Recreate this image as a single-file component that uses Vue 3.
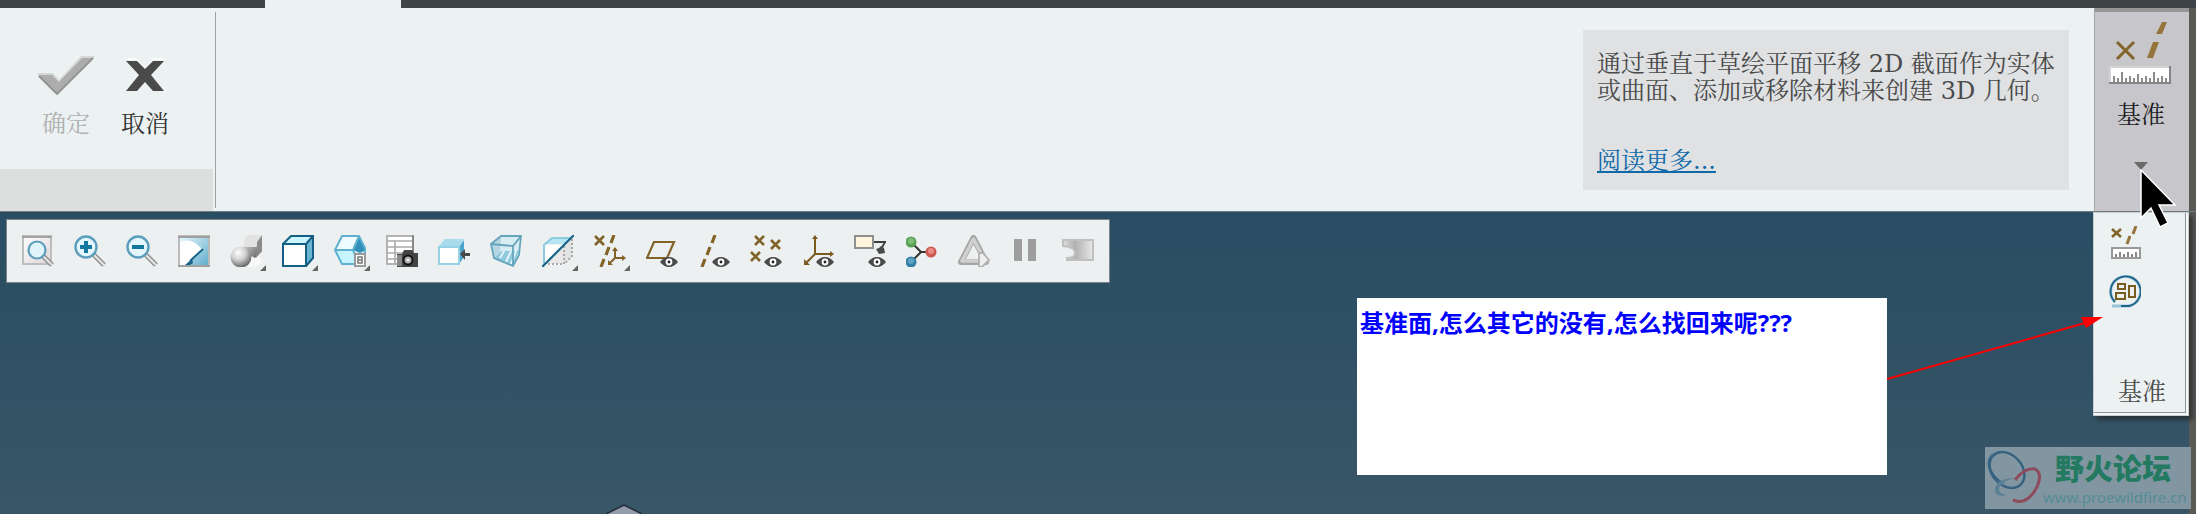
<script setup>
const eye = (x, y) =>
  `<path d="M${x - 9} ${y}Q${x - 5} ${y - 5} ${x} ${y - 5}Q${x + 5} ${y - 5} ${x + 9} ${y}Q${x + 5} ${y + 5} ${x} ${y + 5}Q${x - 5} ${y + 5} ${x - 9} ${y}Z" fill="#4a4a4a"/><circle cx="${x}" cy="${y}" r="3.4" fill="#fff"/><circle cx="${x}" cy="${y}" r="1.4" fill="#222"/>`

const cross = (x, y) =>
  `<path d="M${x} ${y}l9 9m0-9l-9 9" stroke="#826429" stroke-width="2.6" fill="none"/>`

const lens = (sign) =>
  `<path d="M20 20l10 10" stroke="#8c8c8c" stroke-width="5"/><path d="M20 20l10 10" stroke="#e2e2e2" stroke-width="2.4"/><circle cx="12" cy="12" r="10.5" fill="#e4f6fd" stroke="#5b9dba" stroke-width="2.4"/><path d="${sign}" stroke="#13779f" stroke-width="4" fill="none"/>`

const tools = [
  {
    label: '重新调整',
    art: '<rect x="1" y="1" width="28" height="28" fill="url(#paper)" stroke="#bdbdbd" stroke-width="2"/><path d="M0 2h30" stroke="#a3a3a3" stroke-width="2"/><path d="M21 21l9 9" stroke="#8c8c8c" stroke-width="5"/><path d="M21 21l9 9" stroke="#e2e2e2" stroke-width="2.4"/><circle cx="15" cy="15" r="8.5" fill="#dff5fb" stroke="#5b9dba" stroke-width="2.2"/>',
  },
  { label: '放大', art: lens('M6 12h12M12 6v12') },
  { label: '缩小', art: lens('M6 12h12') },
  {
    label: '重画',
    art: '<rect x="1" y="1" width="30" height="30" fill="url(#sky)" stroke="#bcbcbc" stroke-width="2"/><path d="M0 2h32M0 31h32" stroke="#a0a0a0" stroke-width="2"/><path d="M2 7Q13 2 24 14L9 30H2Z" fill="#fff"/><path d="M25 14L12 26" stroke="#176489" stroke-width="2"/><path d="M7 30l7-6 1 4-3 2z" fill="#176489"/>',
  },
  {
    label: '渲染选项',
    menu: true,
    art: '<ellipse cx="22" cy="26" rx="10" ry="6" fill="#f8f8f8"/><path d="M14 5l4-5h14v16l-7 7-11-6z" fill="url(#block)"/><path d="M14 5l4-5h14l-5 7v5H14z" fill="#e2e2e2"/><path d="M27 8l5-7v15l-6 7z" fill="#8a8a8a"/><circle cx="11" cy="22" r="10.5" fill="url(#ball)"/>',
  },
  {
    label: '显示样式',
    menu: true,
    art: '<path d="M1 8L9 1H31L24 8Z" fill="#ccf6ff"/><path d="M24 8l7-7v22l-7 8z" fill="#6bb5d3"/><path d="M1 9h23v22H1zM1 9L9 1h22v22l-7 8M24 9l7-8" fill="none" stroke="#146084" stroke-width="2"/><path d="M2 10h21v20H2z" fill="#fff"/>',
  },
  {
    label: '已保存方向',
    menu: true,
    art: '<path d="M8 1h17l-6 14H1z" fill="#eefbff"/><path d="M1 15h18l5 14H8z" fill="#c6f5ff"/><path d="M25 1l7 14-6 3-7-3z" fill="#328fba"/><path d="M8 1h17l7 14-7 14H8L1 15zM1 15h18l6-14M19 15l5 12" fill="none" stroke="#5fb1d0" stroke-width="2"/><path d="M21 19h10v12H21z" fill="#fff" stroke="#9a9a9a" stroke-width="2"/><path d="M24 22h4v6h-4zM24 25h4" fill="none" stroke="#777" stroke-width="1.5"/>',
  },
  {
    label: '视图管理器',
    art: '<path d="M1 1h26v28H1z" fill="#fff" stroke="#b3b3b3" stroke-width="2"/><path d="M1 6h26M1 12h26M1 18h26M1 24h15M9 6v23" stroke="#aaa" stroke-width="1.6"/><path d="M27 0v17" stroke="#888" stroke-width="2"/><path d="M11 19h5l2-4h8l2 3h4v14H11z" fill="#444"/><path d="M11 20h5v11h-5z" fill="#888"/><circle cx="22" cy="25" r="5.5" fill="#151515"/><circle cx="22" cy="25" r="3.5" fill="#aaa"/><circle cx="22" cy="25" r="1.5" fill="#f5f5f5"/>',
  },
  {
    label: '外观',
    art: '<path d="M0 12l7-8h19l-5 8z" fill="#a8dced"/><path d="M21 12l5-7v17l-5 7z" fill="#4aa4cb"/><path d="M1 12h20v17H1z" fill="#fff" stroke="#98d1e5" stroke-width="2"/><path d="M22 19l5-5v4h5v3h-5v4z" fill="#4a4a4a"/>',
  },
  {
    label: '透视图',
    art: '<path d="M1 9L11 1h20l-2 21-6 9L4 23z" fill="#d7ebf2"/><path d="M1 9l10-8-1 15-6 7z" fill="#b5d5e0"/><path d="M4 23l7-7 18 0-6 15z" fill="#8ec9dc"/><path d="M10 23l4-7M16 27l5-11M21 29l5-13" stroke="#e2f6fb" stroke-width="2"/><path d="M1 9L11 1h20l-2 19-6 11-19-8zM1 9l22 2 8-10M23 11v20" fill="none" stroke="#67a5bd" stroke-width="1.8"/>',
  },
  {
    label: '截面',
    menu: true,
    art: '<path d="M2 9l8-6h18l-6 6z" fill="#b5e5f2"/><path d="M2 10h20v20H2z" fill="#fff"/><path d="M2 29V10l8-7h18" fill="none" stroke="#8ccbe0" stroke-width="2"/><path d="M4 29L30 4v18l-7 7z" fill="#dedede" opacity=".7"/><path d="M22 11v18H6M30 4v17l-8 8" fill="none" stroke="#a8a8a8" stroke-width="2" stroke-dasharray="2 2"/><path d="M0 32L32 0" stroke="#176489" stroke-width="2.2"/>',
  },
  {
    label: '基准显示过滤器',
    menu: true,
    art: cross(1, 1) +
      '<path d="M20 0l-3 8M15 12l-3 8M10 24l-3 8" stroke="#826429" stroke-width="3.2"/><path d="M21 13v10h10M21 23l-5 5" fill="none" stroke="#826429" stroke-width="2"/><path d="M18 16l3-4 3 4zM28 20l4 3-4 3zM14 25v5h5z" fill="#826429"/>',
  },
  {
    label: '平面显示',
    art: '<path d="M8 7h20l-7 16H1z" fill="none" stroke="#826429" stroke-width="2.2"/>' + eye(23, 27),
  },
  {
    label: '轴显示',
    art: '<path d="M17 0l-3 8M12 12l-3 8M7 24l-3 8" stroke="#826429" stroke-width="3.2"/>' + eye(23, 27),
  },
  { label: '点显示', art: cross(5, 1) + cross(21, 5) + cross(1, 17) + eye(23, 27) },
  {
    label: '坐标系显示',
    art: '<path d="M13 2v17h17M13 19l-9 9" fill="none" stroke="#7a5c20" stroke-width="2"/><path d="M10 4l3-4 3 4zM28 16l4 3-4 3zM2 24v6h6z" fill="#7a5c20"/>' + eye(23, 27),
  },
  {
    label: '注释显示',
    art: '<path d="M1 1h18v12H1z" fill="#fff5de" stroke="#8f8f8f" stroke-width="2"/><path d="M20 7h12M31 7l-5 9" fill="none" stroke="#3d3d3d" stroke-width="1.8"/><path d="M22 14l3-1 2-2 3 2 1 5-6 1z" fill="#4a4a4a"/>' + eye(23, 27),
  },
  {
    label: '旋转中心',
    art: '<path d="M5 7l10 10h10M15 17L5 27" fill="none" stroke="#333" stroke-width="2"/><circle cx="5" cy="7" r="5.5" fill="#59a158"/><circle cx="5" cy="6" r="3" fill="#82bd78"/><circle cx="25" cy="17" r="5.5" fill="#cd5951"/><circle cx="25" cy="16" r="3" fill="#e88b84"/><circle cx="5" cy="27" r="5.5" fill="#3581a6"/><circle cx="5" cy="26" r="3" fill="#5ea3c3"/>',
  },
  {
    label: '仿真',
    off: true,
    art: '<path d="M15.5 3L28 27H3z" fill="none" stroke="#a6a6a6" stroke-width="6" stroke-linejoin="round"/><path d="M15.5 4L27 26H4z" fill="none" stroke="#d0d0d0" stroke-width="3.5" stroke-linejoin="round"/><path d="M21 18h4l6 7-7 7h-3z" fill="#eee" stroke="#b1b1b1" stroke-width="1.8"/>',
  },
  { label: '暂停', off: true, art: '<path d="M4 4h8v22H4zM18 4h8v22h-8z" fill="#9e9e9e"/>' },
  {
    label: '恢复',
    off: true,
    art: '<path d="M1 5h30v20H5v-2q8 0 8-5 0-6-12-7z" fill="url(#fade)" stroke="#c0c0c0" stroke-width="2"/>',
  },
]
</script>

<template>
  <div class="app">
    <svg class="defs" width="0" height="0" aria-hidden="true">
      <defs>
        <linearGradient id="paper" x2="1" y2="1"><stop stop-color="#fff" /><stop offset="1" stop-color="#ddd5d8" /></linearGradient>
        <linearGradient id="sky" x2="1" y2="1"><stop stop-color="#eafaff" /><stop offset="1" stop-color="#5eabc9" /></linearGradient>
        <linearGradient id="block" x2="1" y2="1"><stop stop-color="#eee" /><stop offset="1" stop-color="#555" /></linearGradient>
        <radialGradient id="ball" cx=".38" cy=".3" r=".7"><stop stop-color="#fff" /><stop offset=".5" stop-color="#cfcfcf" /><stop offset="1" stop-color="#686868" /></radialGradient>
        <linearGradient id="fade"><stop stop-color="#ddd" /><stop offset=".4" stop-color="#b0b0b0" /><stop offset="1" stop-color="#e8e8e8" /></linearGradient>
      </defs>
    </svg>

    <div class="tabs"><span class="tab"></span></div>

    <header class="ribbon">
      <section class="confirm">
        <div class="confirm-buttons">
          <button class="big" disabled>
            <svg width="58" height="40" viewBox="0 0 58 40">
              <path d="M0 18H16L22 25L44 1H58L20 40Z" fill="#d5d7d7" />
              <path d="M1 20H15L22 27L45 3H57L20 39Z" fill="#adadad" />
              <path d="M2 21L20 39L56 3" fill="none" stroke="#959595" stroke-width="2" />
            </svg>
            <span>确定</span>
          </button>
          <button class="big">
            <svg width="40" height="40" viewBox="0 0 40 40">
              <path d="M1 4H11L20 14L29 4H39" fill="none" stroke="#fafafa" stroke-width="2" />
              <path d="M1 6H12L20 14L28 6H39L26 20L39 36H28L20 27L12 36H1L14 20Z" fill="#4a4a4a" />
            </svg>
            <span>取消</span>
          </button>
        </div>
        <div class="confirm-foot"></div>
      </section>
      <div class="divider"></div>
      <div class="space"></div>
      <article class="help">
        <p>通过垂直于草绘平面平移 2D 截面作为实体<br />或曲面、添加或移除材料来创建 3D 几何。</p>
        <a href="#">阅读更多...</a>
      </article>
      <button class="datum">
        <svg width="64" height="64" viewBox="0 0 64 64">
          <path d="M8 20L25 37M25 20L8 37" stroke="#826429" stroke-width="3" />
          <path d="M53 0h5l-5 12h-6zM44 20h6l-6 16h-6z" fill="#94743a" />
          <path d="M1 45h60v17H1z" fill="#fff" />
          <path d="M1 62V45H60" fill="none" stroke="#d4d4d4" stroke-width="2" />
          <path d="M0 61H61V44" fill="none" stroke="#858585" stroke-width="2" />
          <path d="M5 60V54M9 60V56M13 60V50M17 60V56M21 60V54M25 60V56M29 60V52M33 60V56M37 60V54M41 60V56M45 60V50M49 60V56M53 60V54M57 60V56" stroke="#8c8c8c" stroke-width="2" />
        </svg>
        <span>基准</span>
        <svg class="caret" width="14" height="8" viewBox="0 0 14 8"><path d="M0 0h14L7 8z" fill="#6b6b6b" /></svg>
      </button>
      <div class="edge"></div>
    </header>

    <main class="canvas">
      <nav class="toolbar">
        <button v-for="t in tools" :key="t.label" class="tool" :class="{ menu: t.menu }" :disabled="t.off" :aria-label="t.label">
          <svg width="32" height="32" viewBox="0 0 32 32" v-html="t.art"></svg>
        </button>
      </nav>

      <div class="note">基准面,怎么其它的没有,怎么找回来呢???</div>

      <svg class="model" width="36" height="10" viewBox="0 0 36 10">
        <path d="M0 10L18 1L36 10" fill="#929dac" stroke="#222b33" stroke-width="1.5" />
      </svg>
      <div class="edge canvas-edge"></div>

      <div class="dropdown">
        <button class="item" aria-label="基准工具">
          <svg width="32" height="34" viewBox="0 0 32 34">
            <path d="M3 3l9 8m0-8l-9 8" stroke="#826429" stroke-width="2.6" />
            <path d="M27 0l-3 8M21 10l-3 8" stroke="#94743a" stroke-width="3" />
            <path d="M3 22h28v10H3z" fill="#fff" stroke="#999" stroke-width="2" />
            <path d="M7 31v-3M11 31v-5M15 31v-3M19 31v-5M23 31v-3M27 31v-5" stroke="#888" stroke-width="2" />
          </svg>
        </button>
        <button class="item" aria-label="布局">
          <svg width="32" height="34" viewBox="0 0 32 34">
            <path d="M6 27A15 15 0 1 1 20 31H3" fill="none" stroke="#9bc4d8" stroke-width="3" />
            <path d="M6 27A15 15 0 1 1 20 31H12" fill="none" stroke="#20658a" stroke-width="1.8" />
            <path d="M9 9h7v5H9zM7 18h9v6H7zM20 11h6v11h-6z" fill="none" stroke="#7a5c20" stroke-width="2" />
          </svg>
        </button>
        <div class="dropdown-title">基准</div>
      </div>

      <svg class="arrow" width="216" height="66" viewBox="0 0 216 66">
        <path d="M0 62L198 6" stroke="#f00" stroke-width="2" />
        <path d="M194 0L216 0L199 11Z" fill="#f00" />
      </svg>

      <div class="mark">
        <svg width="58" height="58" viewBox="0 0 58 58">
          <g fill="none">
            <ellipse cx="22" cy="21" rx="15" ry="20" transform="rotate(-42 22 21)" stroke="#36617f" stroke-width="2.5" />
            <path d="M4 15Q8 28 21 35Q7 31 3 19Q1 8 9 3Q3 9 4 15Z" fill="#36617f" />
            <path d="M30 31Q40 18 50 20Q58 24 52 38Q42 57 28 51" stroke="#8e4c5c" stroke-width="3" />
            <path d="M51 21Q61 28 49 43Q41 53 31 54Q47 50 52 36Q55 27 51 21Z" fill="#8e4c5c" />
            <path d="M31 29Q12 29 10 40Q9 49 23 46Q11 45 15 37Q19 31 31 29Z" fill="#5b7f94" />
          </g>
        </svg>
        <div class="mark-text">
          <strong>野火论坛</strong>
          <span>www.proewildfire.cn</span>
        </div>
      </div>
    </main>

    <svg class="cursor" width="40" height="62" viewBox="0 0 40 62">
      <path d="M2 1V49L12 39L21 58L29 54L20 36H36Z" fill="#000" stroke="#fff" stroke-width="1.5" />
    </svg>
  </div>
</template>

<style>
body {
  margin: 0;
}
</style>

<style scoped>
.app {
  position: relative;
  display: flex;
  flex-direction: column;
  min-height: 100vh;
  overflow: hidden;
  font-family: "DejaVu Serif", "Noto Serif CJK SC", "Noto Sans CJK SC", serif;
  font-size: 24px;
  line-height: 27px;
  color: #333;
}
.defs {
  position: absolute;
}
button {
  margin: 0;
  padding: 0;
  border: 0;
  background: none;
  font: inherit;
  color: inherit;
}
svg {
  display: block;
  flex: none;
}
.tabs {
  display: flex;
  height: 8px;
  padding-left: 265px;
  background: #3d4546;
}
.tab {
  width: 136px;
  background: #ecf1f2;
}
.ribbon {
  display: flex;
  height: 203px;
  background: #ecf1f2;
  border-bottom: 1px solid #6f7d84;
}
.confirm {
  display: flex;
  flex-direction: column;
  width: 213px;
}
.confirm-buttons {
  display: flex;
  flex: 1;
  gap: 20px;
  padding: 47px 0 0 37px;
}
.big {
  display: flex;
  flex-direction: column;
  align-items: center;
  gap: 16px;
  width: 58px;
}
.big:last-child {
  width: 60px;
}
.big:disabled {
  color: #b0b2b2;
}
.confirm-foot {
  height: 42px;
  background: #dddfde;
}
.divider {
  width: 1px;
  margin: 4px 0 3px 2px;
  background: #9da1a2;
}
.space {
  flex: 1;
}
.help {
  box-sizing: border-box;
  width: 486px;
  height: 160px;
  margin: 22px 26px 0 0;
  padding: 21px 0 0 14px;
  background: #dfe1e3;
  color: #4a4a4a;
  white-space: nowrap;
}
.help p {
  margin: 0 0 43px;
}
.help a {
  color: #1069a8;
}
.datum {
  display: flex;
  flex-direction: column;
  align-items: center;
  box-sizing: border-box;
  width: 94px;
  padding: 10px 2px 0 0;
  border-top: 4px solid #969696;
  background: #c7c6cb;
  box-shadow: -1px 0 #a4a6a8;
  color: #1c1c1c;
}
.datum span {
  margin: 16px 0 33px;
}
.edge {
  width: 7px;
  background: #5a5956;
}
.canvas {
  position: relative;
  flex: 1;
  padding: 7px 0 0 6px;
  background: linear-gradient(#294d63, #385667);
}
.toolbar {
  display: inline-flex;
  align-items: flex-start;
  gap: 20px;
  box-sizing: border-box;
  height: 64px;
  padding: 15px;
  border: 1px solid #79858b;
  background: #ecf0f1;
}
.tool {
  position: relative;
  width: 32px;
  height: 32px;
}
.tool.menu::after {
  content: "";
  position: absolute;
  right: -4px;
  bottom: -4px;
  border: 3px solid;
  border-color: transparent #666 #666 transparent;
}
.note {
  position: absolute;
  top: 86px;
  right: 309px;
  box-sizing: border-box;
  width: 530px;
  height: 177px;
  padding: 11px 3px;
  background: #fff;
  color: #00f;
  font-family: "Open Sans", "Noto Sans CJK SC", sans-serif;
  font-weight: 700;
}
.model {
  position: absolute;
  left: 606px;
  bottom: 0;
}
.canvas-edge {
  position: absolute;
  top: 0;
  right: 0;
  bottom: 0;
}
.dropdown {
  position: absolute;
  top: 0;
  right: 7px;
  display: flex;
  flex-direction: column;
  gap: 15px;
  box-sizing: border-box;
  width: 96px;
  height: 204px;
  padding: 13px 0 0 15px;
  border: 1px solid #c8cdcf;
  background: #ecf1f2;
  box-shadow: inset -2px -2px #f6f8f8, inset -3px -3px #8c9295, 4px 4px 4px #2229;
}
.item {
  width: 32px;
  height: 34px;
}
.dropdown-title {
  margin: 55px 13px 0 0;
  text-align: center;
  color: #4a4a4a;
}
.arrow {
  position: absolute;
  top: 105px;
  right: 93px;
}
.mark {
  position: absolute;
  right: 5px;
  bottom: 5px;
  display: flex;
  align-items: center;
  width: 206px;
  height: 62px;
  background: #8296a2;
  white-space: nowrap;
}
.mark-text {
  display: flex;
  flex-direction: column;
  font-family: "Open Sans", "Noto Sans CJK SC", sans-serif;
}
.mark-text strong {
  padding: 3px 0 0 12px;
  font-size: 29px;
  line-height: 34px;
  font-weight: 900;
  color: #237a61;
}
.mark-text span {
  font-family: "Noto Sans", sans-serif;
  font-size: 15px;
  line-height: 22px;
  color: #548c94;
}
.cursor {
  position: absolute;
  top: 169px;
  right: 17px;
}
</style>
